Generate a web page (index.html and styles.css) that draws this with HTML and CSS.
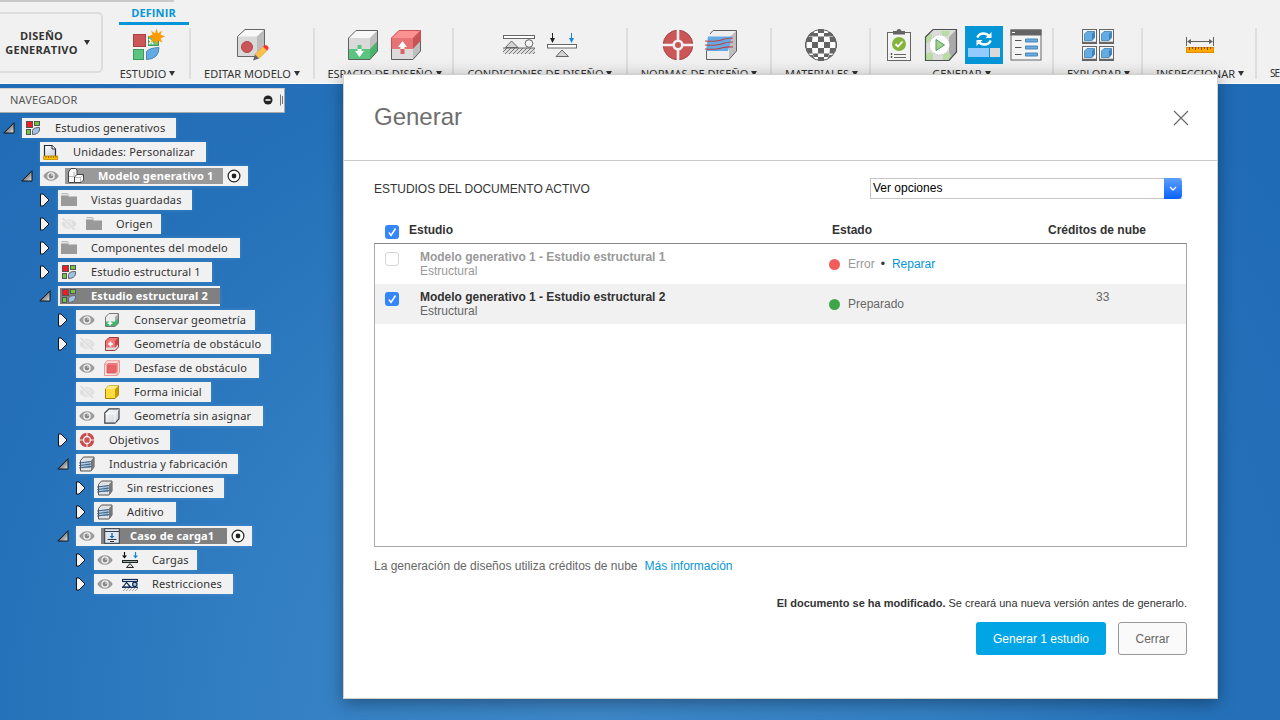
FILE: index.html
```html
<!DOCTYPE html>
<html lang="es">
<head>
<meta charset="utf-8">
<title>Generar</title>
<link rel="stylesheet" href="styles.css">
</head>
<body>
<svg class="sprites" width="0" height="0" aria-hidden="true">
  <defs>
    <linearGradient id="g-tri" x1="0" y1="0" x2="1" y2="1"><stop offset=".3" stop-color="#555"/><stop offset="1" stop-color="#eee"/></linearGradient>
    <linearGradient id="g-blue" x1="0" y1="0" x2="1" y2="1"><stop offset="0" stop-color="#d5e6f4"/><stop offset="1" stop-color="#6c9fce"/></linearGradient>
    <linearGradient id="g-gray" x1="0" y1="0" x2="1" y2="1"><stop offset="0" stop-color="#fff"/><stop offset="1" stop-color="#c8ccd6"/></linearGradient>
    <pattern id="hatch" width="4" height="4" patternUnits="userSpaceOnUse"><path d="M0 4L4 0M-1 1L1-1M3 5L5 3" stroke="#777" stroke-width="1"/></pattern>
  </defs>
  <symbol id="open" viewBox="0 0 12 12"><path d="M11 .8V11H.8Z" fill="url(#g-tri)" stroke="#111"/></symbol>
  <symbol id="closed" viewBox="0 0 12 14"><path d="M1.500 1H4L10 7L4 13H1.500Z" fill="#f3f3f3" stroke="#111"/></symbol>
  <symbol id="eye" viewBox="0 0 16 12"><path d="M.3 6C3-.4 13-.4 15.700 6C13 12.400 3 12.400.3 6Z" fill="#9b9b9b"/><circle cx="8" cy="6" r="3.100" fill="#8a8a8a" stroke="#f1f1f1" stroke-width="1.300"/><circle cx="9" cy="5" r=".8" fill="#eee"/></symbol>
  <symbol id="eyeoff" viewBox="0 0 16 12"><path d="M.3 6C3-.4 13-.4 15.700 6C13 12.400 3 12.400.3 6Z" fill="#dfdfdf"/><circle cx="8" cy="6" r="3" fill="#dfdfdf" stroke="#f1f1f1"/><path d="M1-.5L14 12.500" stroke="#f1f1f1" stroke-width="3"/><path d="M1.500 0L14 12" stroke="#d8d8d8" stroke-width="1.300"/></symbol>
  <symbol id="study" viewBox="0 0 16 16"><rect x="1.500" y="1.500" width="6" height="6" fill="#ee1d25" stroke="#555"/><rect x="9.500" y="1.500" width="5" height="4" fill="#6cc63e" stroke="#555"/><rect x="1.500" y="9.500" width="4" height="5" fill="#6cc63e" stroke="#555"/><path d="M7.500 14.500V10.500C8 8 11 7.500 14.500 7.500V10C14 13 11 14.500 7.500 14.500Z" fill="#9fc3e6" stroke="#666"/></symbol>
  <symbol id="units" viewBox="0 0 16 16"><path d="M1.500 12V1.500H9L12.500 5V12" fill="url(#g-gray)" stroke="#222c3c" stroke-width="1.200"/><path d="M9 1.500V5H12.500" fill="#fff" stroke="#222c3c"/><rect x=".7" y="12" width="14" height="3.500" fill="#ffc400" stroke="#c88800" stroke-width=".8"/><path d="M3 12V14M5.500 12V14M8 12V14M10.500 12V14M13 12V14" stroke="#7a5200" stroke-width=".7"/></symbol>
  <symbol id="model" viewBox="0 0 16 16"><path d="M.5 4L3 .5H7.500L9 2V14.500H.5Z" fill="#f8f8f8" stroke="#444"/><path d="M6.500 9L9 6.500H15.500V12L13 14.500H6.500Z" fill="#fff" stroke="#444"/><path d="M1 8.500H6M6 4V8.500M7 9.500H12.500M12.500 9.500L15 7M12.500 9.500V14" stroke="#aaa" stroke-width=".8" fill="none"/></symbol>
  <symbol id="folder" viewBox="0 0 16 14"><path d="M0 2H7L8.500 3.500H16V13H0Z" fill="#9a9a9a"/><path d="M.5.700H6.500L7.500 1.800" fill="none" stroke="#aaa"/><path d="M0 2.500H7L8.500 4.200" fill="none" stroke="#ddd" stroke-width=".6"/></symbol>
  <symbol id="keep" viewBox="0 0 16 16"><path d="M1.500 5L5 1.500H14.500V11L11 14.500H1.500Z" fill="#eee"/><path d="M11 5L14.500 1.500V11L11 14.500Z" fill="#aaa"/><path d="M1.500 9.500H11L14.500 6V11L11 14.500H1.500Z" fill="#3fb66a"/><path d="M1.500 5L5 1.500H14.500V11L11 14.500H1.500Z" fill="none" stroke="#777"/><path d="M6 9V13.500M3.700 11.200H8.300" stroke="#fff" stroke-width="1.500"/></symbol>
  <symbol id="obst" viewBox="0 0 16 16"><path d="M1.500 5L5 1.500H14.500V11L11 14.500H1.500Z" fill="#ef7476"/><path d="M11 5L14.500 1.500V11L11 14.500Z" fill="#c94346"/><path d="M1.500 11.500H11L14.500 8V11L11 14.500H1.500Z" fill="#ddd"/><path d="M1.500 5L5 1.500H14.500V11L11 14.500H1.500Z" fill="none" stroke="#a33a3c"/><path d="M6.500 5.500V10.500M4 8H9" stroke="#fff" stroke-width="1.700"/></symbol>
  <symbol id="offset" viewBox="0 0 16 16"><path d="M.5 4L3 .7H15.500V12.500L13 15.500H.5Z" fill="#fae1e1" stroke="#ee8e90" stroke-width=".9"/><path d="M3 5L4.500 3.500H13V11L11.500 13H3Z" fill="#e86467" stroke="#d65457" stroke-width=".8"/><path d="M.5 4H13V15.500M13 4L15.500.7" fill="none" stroke="#ee8e90"/></symbol>
  <symbol id="seed" viewBox="0 0 16 16"><path d="M1.500 5L5 1.500H14.500V11L11 14.500H1.500Z" fill="#ffdb3d" stroke="#a88100"/><path d="M11 5L14.500 1.500V11L11 14.500Z" fill="#c69c00"/><path d="M1.500 5L5 1.500H14.500L11 5Z" fill="#ffeb84"/></symbol>
  <symbol id="solid" viewBox="0 0 16 16"><path d="M.8 5L5 .8H15V10.800L11 15.200H.8Z" fill="url(#g-gray)" stroke="#39404a" stroke-width="1.200"/><path d="M1.500 5.400H11V14.500M11 5.400L14.500 1.500" stroke="#fff" fill="none"/></symbol>
  <symbol id="target" viewBox="0 0 32 32"><circle cx="16" cy="16" r="14.800" fill="#cb5658" stroke="#a94142"/><path d="M16 0V32M0 16H32" stroke="#f1f1f1" stroke-width="2.600"/><circle cx="16" cy="16" r="5.600" fill="#f1f1f1"/><circle cx="16" cy="16" r="3" fill="#cb5658"/></symbol>
  <symbol id="target-sm" viewBox="0 0 16 16"><circle cx="8" cy="8" r="7.300" fill="#cb4a4c"/><path d="M8 0V16M0 8H16" stroke="#f1f1f1" stroke-width="1.100"/><circle cx="8" cy="8" r="3.500" fill="none" stroke="#f1f1f1" stroke-width="1.300"/><path d="M8 5.500V10.500M5.500 8H10.500" stroke="#cb4a4c" stroke-width="1.600"/></symbol>
  <symbol id="manuf" viewBox="0 0 16 16"><path d="M1.500 4.500L4.500 1H15V11L12 15H1.500Z" fill="#e2e2e2" stroke="#555"/><path d="M12 4.500L15 1V11L12 15Z" fill="#777"/><path d="M2 5H11.500V12H2Z" fill="url(#g-blue)"/><path d="M0 7Q5 6.500 12 5.500M0 9.500Q5 9 12 8M0 12Q5 11.500 12 10.500" fill="none" stroke="#3b5877" stroke-width=".9"/></symbol>
  <symbol id="case" viewBox="0 0 16 16"><rect x=".7" y=".7" width="14.600" height="14.600" fill="#dfe5ee" stroke="#333d4a"/><path d="M1 3.500H15" stroke="#333d4a"/><path d="M8 5V9" stroke="#176db5" stroke-width="1.400"/><path d="M5.500 8H10.500L8 10.500Z" fill="#176db5"/><path d="M3.500 11.500H12.500M6 13.500H10" stroke="#333d4a"/></symbol>
  <symbol id="loads" viewBox="0 0 16 16"><path d="M2.500 0V4" stroke="#111" stroke-width="1.200"/><path d="M0 3.500H5L2.500 6.500Z" fill="#111"/><path d="M13.500 0V4" stroke="#1487e0" stroke-width="1.200"/><path d="M11 3.500H16L13.500 6.500Z" fill="#1487e0"/><rect x=".5" y="8.500" width="15" height="2" fill="#9aa" stroke="#222"/><path d="M8 11.500L11.500 15.500H4.500Z" fill="#ddd" stroke="#222"/></symbol>
  <symbol id="fix" viewBox="0 0 16 16"><path d="M.5 11.500L2 9.500M1 15L4 12M4 15L7 12M7 15L10 12M10 15L13 12M13 15L16 12" stroke="#999" stroke-width=".9"/><rect x=".5" y="3.500" width="15" height="2" fill="#fff" stroke="#112d56" stroke-width="1.200"/><path d="M1 11L4.500 6.500L8.500 11Z" fill="#fff" stroke="#112d56" stroke-width="1.200"/><circle cx="12.800" cy="8.300" r="2.200" fill="#9fc3e6" stroke="#112d56" stroke-width="1.200"/><path d="M0 11.300H16" stroke="#112d56" stroke-width="1.200"/></symbol>
  <symbol id="radio" viewBox="0 0 14 14"><circle cx="7" cy="7" r="5.900" fill="#fff" stroke="#222" stroke-width="1.200"/><circle cx="7" cy="7" r="2.400" fill="#222"/></symbol>
</svg>

<header class="toolbar">
  <div class="workspace"><span class="ws-name">DISEÑO<br>GENERATIVO</span><i class="caret"></i></div>
  <section class="group g-study">
    <div class="tab">DEFINIR</div>
    <div class="icons"><svg width="34" height="34" viewBox="0 0 34 34"><rect x="2.500" y="6.500" width="12" height="12" fill="#cb5658" stroke="#a94142"/><rect x="17.500" y="8.500" width="10" height="9" fill="#5bc481" stroke="#3d9a5e"/><path d="M18 11L22 16M18 16L24 10" stroke="#fff" stroke-width="1.500"/><rect x="2.500" y="21.500" width="10" height="10" fill="#5bc481" stroke="#3d9a5e"/><path d="M15.500 31.500V23.500Q18 20 28 19.500Q28 31 15.500 31.500Z" fill="#64abe3" stroke="#4d86b4"/><path d="M25.500.5L27 5.500L31 2.500L29.500 6.500L34 8.500L29.500 10.500L31.500 14.500L27 12.500L25.500 17L23.500 12.500L19.500 15L21.500 10.500L17 8.500L21.500 6.500L20 2.500L24 5.500Z" fill="#f90"/></svg></div>
    <div class="label">ESTUDIO<i class="caret"></i></div>
  </section>
  <section class="group g-edit">
    <div class="icons"><svg width="34" height="34" viewBox="0 0 34 34"><path d="M2.500 8.500L10 1.500H29.500V22L22 28.500H2.500Z" fill="#d9d9d9"/><path d="M2.500 8.500L10 1.500H29.500L22 8.500Z" fill="#f8f8f8"/><path d="M22 8.500L29.500 1.500V22L22 28.500Z" fill="#bcbcbc"/><path d="M2.500 8.500L10 1.500H29.500V22L22 28.500H2.500Z" fill="none" stroke="#666"/><circle cx="12" cy="19" r="5.500" fill="#cb5658" stroke="#b04547"/><path d="M20 26.500L28 18.500L32 22.500L24 30.500Z" fill="#fdc04b" stroke="#d99a29" stroke-width=".6"/><path d="M20 26.500L24 30.500L18 32.500Z" fill="#666"/><path d="M28 18.500Q31 15.500 33 18.500Q34.500 20.500 32 22.500Z" fill="#ff3136"/></svg></div>
    <div class="label">EDITAR MODELO<i class="caret"></i></div>
  </section>
  <section class="group g-space">
    <div class="icons">
      <svg width="32" height="32" viewBox="0 0 32 32"><path d="M1.500 9L9 1.500H30.500V22L23 30.500H1.500Z" fill="#d9d9d9"/><path d="M1.500 9L9 1.500H30.500L23 9Z" fill="#f8f8f8"/><path d="M23 9L30.500 1.500V22L23 30.500Z" fill="#bfbfbf"/><path d="M1.500 20H23V30.500H1.500Z" fill="#5bc481"/><path d="M23 20L30.500 12V22L23 30.500Z" fill="#4bb46b"/><path d="M1.500 9L9 1.500H30.500V22L23 30.500H1.500Z" fill="none" stroke="#606060"/><path d="M10.500 16H14.500V20H10.500Z" fill="#5bc481"/><path d="M10.500 20H14.500V22H17L12.500 28L8 22H10.500Z" fill="#fff"/></svg>
      <svg width="32" height="32" viewBox="0 0 32 32"><path d="M1.500 9L9 1.500H30.500V22L23 30.500H1.500Z" fill="#e77475"/><path d="M1.500 9L9 1.500H30.500L23 9Z" fill="#fd9192"/><path d="M23 9L30.500 1.500V12L23 20Z" fill="#c95354"/><path d="M1.500 20H23V30.500H1.500Z" fill="#dcdcdc"/><path d="M23 20L30.500 12V22L23 30.500Z" fill="#bfbfbf"/><path d="M1.500 20V9L9 1.500H30.500V12" fill="none" stroke="#c95354"/><path d="M1.500 20V30.500H23L30.500 22V12" fill="none" stroke="#606060"/><path d="M10.500 20H14.500V25H10.500Z" fill="#d96465"/><path d="M10.500 20H14.500V18H17L12.500 12L8 18H10.500Z" fill="#fff"/></svg>
    </div>
    <div class="label">ESPACIO DE DISEÑO<i class="caret"></i></div>
  </section>
  <section class="group g-cond">
    <div class="icons">
      <svg width="34" height="32" viewBox="0 0 34 32"><rect x="1.500" y="6.500" width="31" height="3" fill="#fff" stroke="#666"/><path d="M3.500 18.500L9.500 12L16 18.500Z" fill="#d5d5d5" stroke="#666"/><circle cx="27" cy="14.500" r="3.800" fill="#f5f5f5" stroke="#666"/><rect x="1" y="19" width="32" height="6" fill="#ddd"/><rect x="1" y="19" width="32" height="6" fill="url(#hatch)"/><path d="M1 19H33" stroke="#666"/></svg>
      <svg width="32" height="32" viewBox="0 0 32 32"><path d="M6.500 4V10" stroke="#222"/><path d="M4 9H9L6.500 14Z" fill="#222"/><path d="M25.500 4V10" stroke="#1487e0"/><path d="M23 9H28L25.500 14Z" fill="#1487e0"/><rect x="1.500" y="15.500" width="29" height="3.500" fill="#fff" stroke="#666"/><path d="M16 21L22.500 27.500H10Z" fill="#d2d2d2" stroke="#666"/></svg>
    </div>
    <div class="label">CONDICIONES DE DISEÑO<i class="caret"></i></div>
  </section>
  <section class="group g-norm">
    <div class="icons">
      <svg width="32" height="32"><use href="#target"/></svg>
      <svg width="34" height="32" viewBox="0 0 34 32"><path d="M2.500 9L9 1.500H32.500V22L25 30.500H2.500Z" fill="#eee"/><path d="M25 9L32.500 1.500V22L25 30.500Z" fill="#bfbfbf"/><path d="M2.500 22V30.500H25L32.500 22V1.500H9L6 5" fill="none" stroke="#606060"/><path d="M4 7.500H28L24 22H2Z" fill="#64abe3"/><path d="M1 12Q13 13 19 10.500Q23 9 29 9M1 16Q13 17 19 14.500Q23 13 29 13M1 20Q13 21 19 18.500Q23 17.500 29 18" fill="none" stroke="#c33c43" stroke-width="1.100"/></svg>
    </div>
    <div class="label">NORMAS DE DISEÑO<i class="caret"></i></div>
  </section>
  <section class="group g-mat">
    <div class="icons"><svg width="34" height="34" viewBox="0 0 34 34"><clipPath id="ball"><circle cx="17" cy="17" r="16"/></clipPath><circle cx="17" cy="17" r="15.500" fill="#fff"/><g clip-path="url(#ball)" fill="#646464"><path d="M14 0H20V5H14ZM5 4H10L8.500 8H3ZM24 4H29V8H25.500ZM9.500 5H14V8.500H8.500ZM20 5H24.500L25.500 8.500H20ZM14 8.500H20V14H14ZM3 8.500H8.500L8 14H1.500ZM25.500 8.500H31L32.500 14H26ZM8 14H14V20H8ZM20 14H26V20H20ZM0 14H2.500V20H0ZM31.500 14H34V20H31.500ZM14 20H20V25.500H14ZM2 20H8L8.500 25.500H4ZM26 20H32L30 25.500H25.500ZM8.500 25.500H14V29H10ZM20 25.500H25.500L24 29H20ZM14 29H20V34H14ZM5 27H8.500L11 31ZM29 27H25.500L23 31Z"/></g><circle cx="17" cy="17" r="15.500" fill="none" stroke="#646464"/></svg></div>
    <div class="label">MATERIALES<i class="caret"></i></div>
  </section>
  <section class="group g-gen">
    <div class="icons">
      <svg class="check" width="26" height="34" viewBox="0 0 26 34"><rect x="1.500" y="4.500" width="23" height="28" fill="#f4f4f4" stroke="#666"/><path d="M7 3H10.500Q11 1 13 1Q15 1 15.500 3H19V6.500H7Z" fill="#646464"/><circle cx="13" cy="16" r="7" fill="#83b43d"/><path d="M9.500 16L12 18.500L16.500 13.500" fill="none" stroke="#fff" stroke-width="1.800"/><path d="M5.500 25V27M5.500 28V30" stroke="#555" stroke-width="1.500"/><path d="M8 26.500H20M8 29.500H20" stroke="#666"/></svg>
      <svg width="34" height="34" viewBox="0 0 34 34"><path d="M1.500 9L9 1.500H32.500V24L25 32.500H1.500Z" fill="#dcdcdc"/><path d="M25 9L32.500 1.500V24L25 32.500Z" fill="#aaa"/><path d="M1.500 9L4 6H8V11L4 15H1.500ZM17 3H26L24 8H18ZM1.500 27L5 24L9 26V32H1.500ZM19 27L25 24L27 28L24 32H19Z" fill="#b7dda2"/><path d="M1.500 9L9 1.500H32.500V24L25 32.500H1.500Z" fill="none" stroke="#505050" stroke-width="1.200"/><circle cx="15.500" cy="17" r="10" fill="#fff" stroke="#b8b8b8" stroke-dasharray="1 1.500"/><path d="M12 11.500V22.500L20.500 17Z" fill="#a2d28d" stroke="#4f9b62"/></svg>
      <svg class="active" width="38" height="38" viewBox="0 0 38 38"><path d="M12.300 11.500Q14 7.500 18.500 7.500Q22 7.500 24 10M25.700 14.500Q24 18.500 19.500 18.500Q16 18.500 14 16" fill="none" stroke="#fff" stroke-width="2.400"/><path d="M26.500 6V12H20.500ZM11.500 20V14H17.500Z" fill="#fff"/><rect x="3" y="22" width="21" height="9" fill="#92cbff"/><rect x="25" y="22" width="10" height="9" fill="#d9d9d9"/></svg>
      <svg width="32" height="32" viewBox="0 0 32 32"><rect x="1" y="1" width="30" height="30" fill="#f5f5f5" stroke="#666"/><path d="M.5.500H31.500V6.500H.5Z" fill="#646464"/><path d="M2 3.500H5" stroke="#fff"/><path d="M5 11.500H11.500M5 18.500H11.500M5 25.500H11.500" stroke="#555"/><path d="M15.500 10H27.500V13H15.500ZM15.500 17H27.500V20H15.500ZM15.500 24H27.500V27H15.500Z" fill="#64abe3" stroke="#4d86b4"/></svg>
    </div>
    <div class="label">GENERAR<i class="caret"></i></div>
  </section>
  <section class="group g-exp">
    <div class="icons"><svg width="34" height="34" viewBox="0 0 34 34"><symbol id="cell" viewBox="0 0 15 15"><rect x=".5" y=".5" width="14" height="14" fill="#f5f5f5" stroke="#666"/><path d="M0 13.500H15" stroke="#666" stroke-width="1.500"/><path d="M2.500 5L5 2.500H12.500V8.500L10 11.500H2.500Z" fill="#64abe3" stroke="#3d7fb5" stroke-width=".8"/><path d="M10 5L12.500 2.500V8.500L10 11.500Z" fill="#3b82bd"/></symbol><use href="#cell" x="1" y="1" width="15" height="15"/><use href="#cell" x="18" y="1" width="15" height="15"/><use href="#cell" x="1" y="18" width="15" height="15"/><use href="#cell" x="18" y="18" width="15" height="15"/></svg></div>
    <div class="label">EXPLORAR<i class="caret"></i></div>
  </section>
  <section class="group g-insp">
    <div class="icons"><svg width="30" height="32" viewBox="0 0 30 32"><path d="M1.500 8V17M28.500 8V17M3 12.500H27" stroke="#606060"/><path d="M2 12.500L6 10V15ZM28 12.500L24 10V15Z" fill="#606060"/><rect x="1.500" y="18.500" width="27" height="5" fill="#ffa800" stroke="#e38c00"/><path d="M4.500 18V21M7.500 18V20M10.500 18V21M13.500 18V20M16.500 18V21M19.500 18V20M22.500 18V21M25.500 18V20" stroke="#7e5000"/></svg></div>
    <div class="label">INSPECCIONAR<i class="caret"></i></div>
  </section>
  <section class="group g-sel"><div class="icons"></div><div class="label">SE</div></section>
</header>

<aside class="browser">
  <div class="nav-head"><span>NAVEGADOR</span><svg width="22" height="14" viewBox="0 0 22 14"><circle cx="6" cy="7" r="4.500" fill="#222"/><path d="M3.500 7H8.500" stroke="#fff" stroke-width="1.500"/><path d="M18.500 1.500V12.500M20.500 3V11" stroke="#666" stroke-width=".9"/></svg></div>
  <ul class="tree">
    <li class="l0"><svg class="tw"><use href="#open"/></svg><div class="chip w154"><svg class="ic"><use href="#study"/></svg><span>Estudios generativos</span></div></li>
    <li class="l1"><i class="tw"></i><div class="chip w166"><svg class="ic"><use href="#units"/></svg><span>Unidades: Personalizar</span></div></li>
    <li class="l1"><svg class="tw"><use href="#open"/></svg><div class="chip w208"><svg class="eye"><use href="#eye"/></svg><div class="sel sel-model"><svg class="ic"><use href="#model"/></svg><span>Modelo generativo 1</span></div><svg class="radio"><use href="#radio"/></svg></div></li>
    <li class="l2"><svg class="tw"><use href="#closed"/></svg><div class="chip w134"><svg class="ic"><use href="#folder"/></svg><span>Vistas guardadas</span></div></li>
    <li class="l2"><svg class="tw"><use href="#closed"/></svg><div class="chip w103"><svg class="eye"><use href="#eyeoff"/></svg><svg class="ic"><use href="#folder"/></svg><span>Origen</span></div></li>
    <li class="l2"><svg class="tw"><use href="#closed"/></svg><div class="chip w182"><svg class="ic"><use href="#folder"/></svg><span>Componentes del modelo</span></div></li>
    <li class="l2"><svg class="tw"><use href="#closed"/></svg><div class="chip w154"><svg class="ic"><use href="#study"/></svg><span>Estudio estructural 1</span></div></li>
    <li class="l2"><svg class="tw"><use href="#open"/></svg><div class="chip w162 flush"><div class="sel sel-study"><svg class="ic"><use href="#study"/></svg><span>Estudio estructural 2</span></div></div></li>
    <li class="l3"><svg class="tw"><use href="#closed"/></svg><div class="chip w179"><svg class="eye"><use href="#eye"/></svg><svg class="ic"><use href="#keep"/></svg><span>Conservar geometría</span></div></li>
    <li class="l3"><svg class="tw"><use href="#closed"/></svg><div class="chip w195"><svg class="eye"><use href="#eyeoff"/></svg><svg class="ic"><use href="#obst"/></svg><span>Geometría de obstáculo</span></div></li>
    <li class="l3"><i class="tw"></i><div class="chip w183"><svg class="eye"><use href="#eye"/></svg><svg class="ic"><use href="#offset"/></svg><span>Desfase de obstáculo</span></div></li>
    <li class="l3"><i class="tw"></i><div class="chip w135"><svg class="eye"><use href="#eyeoff"/></svg><svg class="ic"><use href="#seed"/></svg><span>Forma inicial</span></div></li>
    <li class="l3"><i class="tw"></i><div class="chip w187"><svg class="eye"><use href="#eye"/></svg><svg class="ic"><use href="#solid"/></svg><span>Geometría sin asignar</span></div></li>
    <li class="l3"><svg class="tw"><use href="#closed"/></svg><div class="chip w94"><svg class="ic"><use href="#target-sm"/></svg><span>Objetivos</span></div></li>
    <li class="l3"><svg class="tw"><use href="#open"/></svg><div class="chip w162"><svg class="ic"><use href="#manuf"/></svg><span>Industria y fabricación</span></div></li>
    <li class="l4"><svg class="tw"><use href="#closed"/></svg><div class="chip w130"><svg class="ic"><use href="#manuf"/></svg><span>Sin restricciones</span></div></li>
    <li class="l4"><svg class="tw"><use href="#closed"/></svg><div class="chip w82"><svg class="ic"><use href="#manuf"/></svg><span>Aditivo</span></div></li>
    <li class="l3"><svg class="tw"><use href="#open"/></svg><div class="chip w176"><svg class="eye"><use href="#eye"/></svg><div class="sel sel-case"><svg class="ic"><use href="#case"/></svg><span>Caso de carga1</span></div><svg class="radio"><use href="#radio"/></svg></div></li>
    <li class="l4"><svg class="tw"><use href="#closed"/></svg><div class="chip w103"><svg class="eye"><use href="#eye"/></svg><svg class="ic"><use href="#loads"/></svg><span>Cargas</span></div></li>
    <li class="l4"><svg class="tw"><use href="#closed"/></svg><div class="chip w139"><svg class="eye"><use href="#eye"/></svg><svg class="ic"><use href="#fix"/></svg><span>Restricciones</span></div></li>
  </ul>
</aside>

<main class="dialog">
  <div class="dlg-head"><h1>Generar</h1><svg width="16" height="16" viewBox="0 0 16 16"><path d="M1 1L15 15M15 1L1 15" stroke="#666" stroke-width="1.100"/></svg></div>
  <div class="dlg-body">
    <div class="top"><span class="caption">ESTUDIOS DEL DOCUMENTO ACTIVO</span><div class="select"><span>Ver opciones</span><i><svg width="8" height="6" viewBox="0 0 8 6"><path d="M1 1L4 4L7 1" fill="none" stroke="#fff" stroke-width="1.300"/></svg></i></div></div>
    <div class="thead"><svg class="cb on" viewBox="0 0 14 14"><path d="M4 7.500L6 10.500L10.500 3.500"/></svg><b class="c-study">Estudio</b><b class="c-state">Estado</b><b class="c-cred">Créditos de nube</b></div>
    <div class="table">
      <div class="tr off"><svg class="cb"></svg><div class="name"><b>Modelo generativo 1 - Estudio estructural 1</b><span>Estructural</span></div><div class="state"><i class="dot red"></i><span>Error</span><em>•</em><a>Reparar</a></div><div class="cred"></div></div>
      <div class="tr picked"><svg class="cb on" viewBox="0 0 14 14"><path d="M4 7.500L6 10.500L10.500 3.500"/></svg><div class="name"><b>Modelo generativo 1 - Estudio estructural 2</b><span>Estructural</span></div><div class="state"><i class="dot green"></i><span>Preparado</span></div><div class="cred">33</div></div>
    </div>
    <p class="info">La generación de diseños utiliza créditos de nube<a>Más información</a></p>
    <p class="notice"><b>El documento se ha modificado.</b> Se creará una nueva versión antes de generarlo.</p>
    <div class="buttons"><button class="primary">Generar 1 estudio</button><button class="plain">Cerrar</button></div>
  </div>
</main>
</body>
</html>
```

FILE: styles.css
```css
* { box-sizing: border-box; }
body { margin: 0; width: 1280px; height: 720px; overflow: hidden; position: relative; color: #333; font-family: "Noto Sans", "Open Sans", sans-serif; font-size: 11px; background: radial-gradient(ellipse 850px 900px at 590px 720px, #3d87c9 0%, #337fc3 40%, #2571b9 72%, #206bb5 100%); }
svg, i { display: block; flex: none; }
.sprites { position: absolute; }
.caret { width: 0; height: 0; border: 3px solid transparent; border-top: 5px solid #333; border-bottom: 0; margin-left: 3px; }

.toolbar { display: flex; height: 84px; background: #f1f1f1; overflow: hidden; border-bottom: 1px solid #fafafa; }
.workspace { width: 103px; height: 61px; margin-top: 12px; flex: none; border: 2px solid #ddd; border-left: 0; border-radius: 0 5px 5px 0; display: flex; align-items: center; padding-left: 4px; font-family: "Open Sans", sans-serif; font-weight: 700; font-size: 11px; line-height: 14px; text-align: center; letter-spacing: .25px; }
.workspace .caret { margin-left: 5px; }
.workspace::before { content: ""; position: absolute; left: 0; top: 0; width: 174px; height: 2px; background: #c9c9c9; }
.ws-name { width: 75px; white-space: nowrap; }
.group { position: relative; flex: none; display: flex; flex-direction: column; align-items: center; padding-top: 25px; }
.group::after { content: ""; position: absolute; right: -1px; top: 28px; width: 2px; height: 51px; background: #dedede; }
.tab { position: absolute; top: 0; left: 16px; width: 70px; height: 25px; padding-right: 1px; border-bottom: 3px solid #0696d7; color: #0696d7; line-height: 26px; text-align: center; font-family: "Open Sans", sans-serif; font-weight: 700; letter-spacing: .1px; }
.icons { height: 40px; display: flex; align-items: center; gap: 10px; }
.label { display: flex; align-items: center; height: 15px; line-height: 15px; margin-top: 1px; white-space: nowrap; font-size: 11px; }
.g-study { width: 87px; padding-left: 2px; }
.g-edit { width: 124px; }
.g-space { width: 139px; padding-left: 2px; }
.g-space .icons { gap: 11px; margin-left: -1px; }
.g-cond { width: 174px; }
.g-norm { width: 144px; }
.g-norm .icons { margin-left: 2px; }
.g-mat { width: 99px; padding-left: 2px; }
.g-mat .icons { margin-left: -2px; }
.g-gen { width: 183px; }
.g-exp { width: 89px; padding-left: 2px; }
.g-exp .icons { margin-left: -2px; }
.g-insp { width: 114px; padding-left: 2px; }
.g-sel { width: 24px; align-items: flex-start; padding-left: 14px; }
.g-sel::after { display: none; }
.g-sel .label { font-size: 10px; letter-spacing: -1px; }
.g-gen .icons { gap: 7px; margin-left: 5px; }
.check { margin-right: 5px; }
.active { background: #0696d7; }

.browser { width: 300px; }
.nav-head { margin-top: 4px; width: 285px; height: 25px; background: #f1f1f1; border: 1px solid #aaa; border-left: 0; border-top-color: #d5d0cb; display: flex; align-items: center; justify-content: space-between; padding: 0 0 1px 10px; color: #555; letter-spacing: .15px; }
.nav-head span { margin-top: -2px; }
.tree { list-style: none; margin: 3px 0 0; padding: 0; }
.tree li { height: 24px; display: flex; align-items: center; }
.l0 { padding-left: 3px; } .l1 { padding-left: 21px; } .l2 { padding-left: 39px; } .l3 { padding-left: 57px; } .l4 { padding-left: 75px; }
.tw { width: 12px; height: 14px; margin-right: 7px; }
.chip { height: 20px; background: #f1f1f1; display: flex; align-items: center; padding-left: 3px; white-space: nowrap; flex: none; box-shadow: 0 0 4px rgba(120,180,230,.3); }
.chip span { letter-spacing: .15px; margin-top: -2px; }
.ic { width: 16px; height: 16px; margin-right: 14px; }
.eye { width: 16px; height: 12px; margin-right: 9px; }
.eye + .sel { margin-left: 0; }
.sel { background: #808080; color: #fff; font-weight: 700; height: 16px; display: flex; align-items: center; padding-left: 3px; }
.eye:has(+ .sel) { margin-right: 6px; }
.sel-model { width: 158px; background: #999; }
.sel-study { width: 160px; padding-left: 1px; }
.sel-case { width: 126px; }
.sel-case .ic { margin-right: 10px; }
.flush { padding-left: 2px; }
.radio { width: 14px; height: 14px; margin-left: 4px; }
.w82 { width: 82px; } .w94 { width: 94px; } .w103 { width: 103px; } .w130 { width: 130px; } .w134 { width: 134px; } .w135 { width: 135px; } .w139 { width: 139px; } .w154 { width: 154px; } .w162 { width: 162px; } .w166 { width: 166px; } .w176 { width: 176px; } .w179 { width: 179px; } .w182 { width: 182px; } .w183 { width: 183px; } .w187 { width: 187px; } .w195 { width: 195px; } .w208 { width: 208px; }

.dialog { position: absolute; left: 343px; top: 74px; width: 875px; height: 625px; background: #fff; border: 1px solid #cfcfcb; box-shadow: 0 4px 16px rgba(0,0,0,.36); font-family: "Liberation Sans", Arial, sans-serif; font-size: 12px; line-height: 14px; }
.dlg-head { height: 86px; border-bottom: 1px solid #ccc; display: flex; align-items: center; justify-content: space-between; padding: 0 28px 0 30px; }
.dlg-head h1 { margin: -2px 0 0; font-weight: 400; font-size: 24px; line-height: 28px; color: #6e6e6e; }
.dlg-body { padding: 17px 30px 0; }
.top { display: flex; justify-content: space-between; height: 21px; padding-right: 5px; align-items: center; }
.caption { letter-spacing: -.03px; }
.select { width: 312px; height: 21px; border: 1px solid #c6c6c6; border-right: 0; display: flex; justify-content: space-between; align-items: center; padding-left: 2px; color: #000; }
.select span { margin-top: -2px; }
.select i { width: 18px; height: 21px; border-radius: 0 4px 4px 0; background: linear-gradient(#5d9fff, #0a63ff); display: flex; align-items: center; justify-content: center; }
.thead { display: flex; height: 44px; padding: 23px 0 0 11px; }
.cb { width: 14px; height: 14px; border: 1px solid #d6d6d6; border-radius: 3px; background: #fff; }
.cb.on { border: 0; background: #3585fb; }
.cb path { fill: none; stroke: #fff; stroke-width: 1.500; }
.thead .cb { margin-top: 3px; }
.thead b { padding-top: 1px; }
.c-study { margin-left: 10px; width: 423px; }
.c-state { width: 216px; }
.table { width: 813px; height: 304px; border: 1px solid #aaa; border-top-color: #858585; }
.tr { height: 40px; display: flex; padding-left: 10px; color: #666; }
.tr .cb { margin-top: 8px; }
.name { margin: 6px 0 0 21px; width: 409px; display: flex; flex-direction: column; }
.name b { color: #333; letter-spacing: -.015px; }
.picked { background: #f1f1f1; }
.off, .off .name b { color: #999; }
.state { display: flex; align-items: center; width: 267px; }
.dot { width: 11px; height: 11px; border-radius: 50%; margin-right: 8px; }
.red { background: #f15c5c; } .green { background: #3fa648; }
.state em { font-style: normal; color: #333; margin: 0 7px 0 6px; }
a { color: #0696d7; }
.cred { padding-top: 6px; }
.info { margin: 12px 0 0; color: #666; }
.info a { margin-left: 7px; }
.notice { margin: 24px 0 0; font-size: 11px; text-align: right; line-height: 13px; }
.buttons { display: flex; justify-content: flex-end; gap: 12px; margin-top: 12px; }
button { height: 33px; border-radius: 3px; font: 12px "Liberation Sans", Arial, sans-serif; padding: 0; }
.primary { width: 130px; background: #00a5e6; border: 0; color: #fff; }
.plain { width: 69px; background: #fafafa; border: 1px solid #999; color: #666; }
```
